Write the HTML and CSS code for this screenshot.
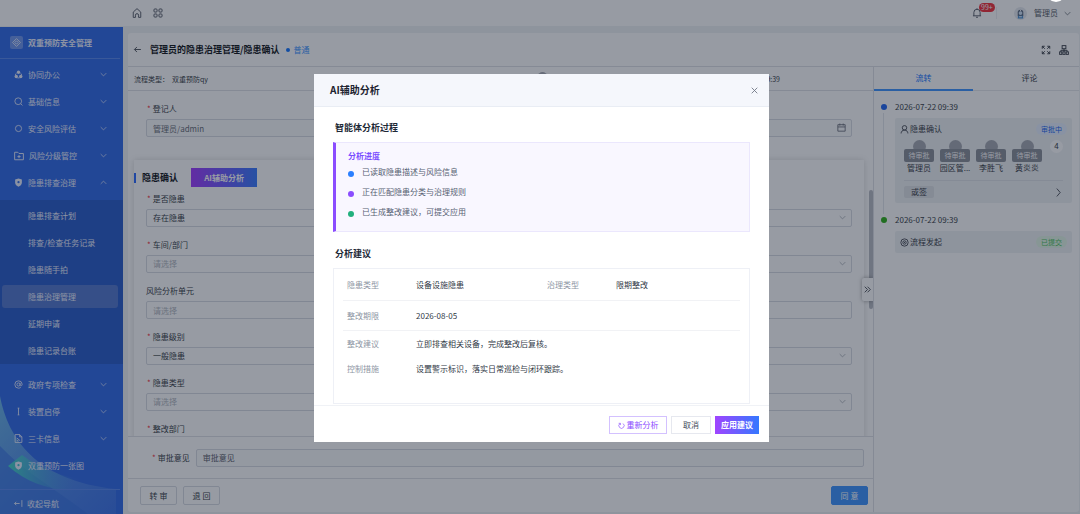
FILE: index.html
```html
<!DOCTYPE html>
<html lang="zh-CN">
<head>
  <meta charset="UTF-8" />
  <meta name="viewport" content="width=device-width, initial-scale=1.0"/>
  <title>双重预防安全管理</title>
  <link rel="stylesheet" href="styles.css">
</head>
<body>
  <!-- shared icons -->
  <svg class="sprite" aria-hidden="true">
    <symbol id="down" viewBox="0 0 10 10"><path d="M1 3l4 4 4-4"/></symbol>
    <symbol id="up" viewBox="0 0 10 10"><path d="M1 7l4-4 4 4"/></symbol>
    <symbol id="shield" viewBox="0 0 16 16"><path fill="currentColor" stroke="none" fill-rule="evenodd" d="M8 1l6 1.500v6C14 12 11 14 8 15.500 5 14 2 12 2 8.500v-6zM8 5.500a2 2 0 100 4 2 2 0 000-4z"/></symbol>
  </svg>

  <div class="app">
    <header class="topbar">
      <div class="topbar-left">
        <svg class="icon" viewBox="0 0 16 16"><path d="M2 15V6.500L8 1l6 5.500V15h-3.500v-3.500a2.500 2.500 0 00-5 0V15z"/></svg>
        <svg class="icon" viewBox="0 0 16 16"><rect x="1.500" y="1.500" width="5" height="5" rx="1.500"/><rect x="9.500" y="1.500" width="5" height="5" rx="1.500"/><rect x="1.500" y="9.500" width="5" height="5" rx="1.500"/><rect x="9.500" y="9.500" width="5" height="5" rx="1.500"/></svg>
      </div>
      <div class="topbar-right">
        <span class="bell">
          <svg class="icon" viewBox="0 0 16 16"><path d="M1.500 12.500h13M3 12.500V7a5 5 0 0110 0v5.500M8 2V.5M6.500 14.800h3"/></svg>
          <span class="count">99+</span>
        </span>
        <span class="avatar">
          <svg viewBox="0 0 14 14"><path fill="#5d6b80" d="M4 6a3 3 0 016 0v4H4z"/><circle cx="7" cy="6.500" r="2" fill="#cfe3f7"/><path fill="#4b8fd0" d="M4.500 9.500h5l.5 3H4z"/><path stroke="#fff" d="M5.500 10.500h3M7 3v1.500"/></svg>
        </span>
        <span class="user">管理员</span>
        <svg class="icon small" viewBox="0 0 10 10"><use href="#down"/></svg>
      </div>
    </header>

    <div class="layout">
      <nav class="sidebar">
        <svg class="swoosh" viewBox="0 0 123 128" preserveAspectRatio="none" aria-hidden="true">
          <defs>
            <linearGradient id="sw1" x1="0" y1="0" x2="1" y2="1"><stop offset="0" stop-color="#7fd0e8" stop-opacity=".75"/><stop offset="1" stop-color="#6f9df0" stop-opacity=".2"/></linearGradient>
            <linearGradient id="sw2" x1="0" y1="0" x2="1" y2="0"><stop offset="0" stop-color="#45d8c8"/><stop offset="1" stop-color="#4b86ea" stop-opacity="0"/></linearGradient>
          </defs>
          <path fill="url(#sw1)" d="M0 10C8 52 36 95 116 103v25H0z"/>
          <path fill="#3b74e4" opacity=".6" d="M0 60c24 26 54 42 88 68H0z"/>
          <path fill="url(#sw2)" d="M8 80L22 69c16 12 34 20 58 24l-12 12C46 102 26 96 8 80z"/>
        </svg>
        <div class="brand">
          <span class="brand-logo"><svg class="icon" viewBox="0 0 16 16"><path d="M8 1l7 7-7 7-7-7zM8 5l3 3-3 3-3-3z"/></svg></span>
          双重预防安全管理
        </div>
        <div class="menu">
          <a href="#"><svg class="icon" viewBox="0 0 16 16"><circle class="fill" cx="8" cy="4" r="3"/><circle class="fill" cx="4" cy="11.500" r="3"/><circle class="fill" cx="12" cy="11.500" r="3"/><path d="M4 6l-2 3M12 6l2 3M6 14h4"/></svg><span>协同办公</span><svg class="arrow"><use href="#down"/></svg></a>
          <a href="#"><svg class="icon" viewBox="0 0 16 16"><circle cx="7.500" cy="7.500" r="6"/><path d="M12 12l3 3"/></svg><span>基础信息</span><svg class="arrow"><use href="#down"/></svg></a>
          <a href="#"><svg class="icon" viewBox="0 0 16 16"><circle cx="8" cy="8" r="5.500"/></svg><span>安全风险评估</span><svg class="arrow"><use href="#down"/></svg></a>
          <a href="#"><svg class="icon big" viewBox="0 0 16 16"><path d="M1 2h5l2 2h7v10H1zM8 6.500v5M5.500 9h5"/></svg><span>风险分级管控</span><svg class="arrow"><use href="#down"/></svg></a>
          <a href="#"><svg class="icon"><use href="#shield"/></svg><span>隐患排查治理</span><svg class="arrow"><use href="#up"/></svg></a>
        </div>
        <div class="submenu">
          <a href="#">隐患排查计划</a>
          <a href="#">排查/检查任务记录</a>
          <a href="#">隐患随手拍</a>
          <a href="#" class="active">隐患治理管理</a>
          <a href="#">延期申请</a>
          <a href="#">隐患记录台账</a>
        </div>
        <div class="menu">
          <a href="#"><svg class="icon" viewBox="0 0 16 16"><circle cx="8" cy="8" r="2.800"/><path d="M10.800 5v4c0 2.500 3.700 2 3.700-1.500A6.500 6.500 0 108 14.500c1.500 0 3-.5 4-1.300"/></svg><span>政府专项检查</span><svg class="arrow"><use href="#down"/></svg></a>
          <a href="#"><svg class="icon" viewBox="0 0 16 16"><path d="M8 2v12M6.500 2h3M6.500 14h3"/></svg><span>装置启停</span><svg class="arrow"><use href="#down"/></svg></a>
          <a href="#"><svg class="icon" viewBox="0 0 16 16"><path d="M2 1h8l4 4v10H2zM10 1v4h4M5 7l6 5M5 12h3"/></svg><span>三卡信息</span><svg class="arrow"><use href="#down"/></svg></a>
          <a href="#"><svg class="icon"><use href="#shield"/></svg><span>双重预防一张图</span></a>
        </div>
        <button class="collapse"><svg class="icon" viewBox="0 0 16 16"><path d="M10 8H1M4 5L1 8l3 3M14 2v12"/></svg>收起导航</button>
      </nav>

      <main class="page">
        <div class="page-head">
          <svg class="icon" viewBox="0 0 16 16"><path d="M14 8H3M7 3.500L2.500 8 7 12.500"/></svg>
          <h1>管理员的隐患治理管理/隐患确认</h1>
          <span class="level">普通</span>
          <svg class="icon big push" viewBox="0 0 16 16"><path d="M2 6V2h4M2 2l4 4M14 6V2h-4M14 2l-4 4M2 10v4h4M2 14l4-4M14 10v4h-4M14 14l-4-4"/></svg>
          <svg class="icon big" viewBox="0 0 16 16"><rect x="5" y="1" width="6" height="5"/><path d="M8 6v3M3 11V8.500h10V11M8 8.500V11"/><rect x="1" y="11" width="3.500" height="4"/><rect x="6.200" y="11" width="3.500" height="4"/><rect x="11.500" y="11" width="3.500" height="4"/></svg>
        </div>

        <div class="page-body">
          <section class="work">
            <div class="meta">
              <span>流程类型：</span><span>双重预防qy</span>
              <span class="meta-time">发起时间：2026-07-22 09:39</span>
              <span class="pull"></span>
            </div>

            <div class="scroll">
              <div class="field first">
                <label class="req" for="reg">登记人</label>
                <div class="control">
                  <input id="reg" type="text" value="管理员/admin" readonly />
                  <svg class="icon" viewBox="0 0 16 16"><path d="M1.500 3h13v11.500h-13zM1.500 7h13M5 1v3.500M11 1v3.500"/></svg>
                </div>
              </div>

              <div class="panel">
                <div class="panel-head">
                  <h2>隐患确认</h2>
                  <button class="ai">AI辅助分析</button>
                </div>
                <div class="field">
                  <label class="req" for="f1">是否隐患</label>
                  <div class="control"><select id="f1"><option>存在隐患</option></select><svg class="arrow"><use href="#down"/></svg></div>
                </div>
                <div class="field">
                  <label class="req" for="f2">车间/部门</label>
                  <div class="control"><select id="f2" class="empty"><option>请选择</option></select><svg class="arrow"><use href="#down"/></svg></div>
                </div>
                <div class="field">
                  <label for="f3">风险分析单元</label>
                  <div class="control"><input id="f3" type="text" placeholder="请选择" /></div>
                </div>
                <div class="field">
                  <label class="req" for="f4">隐患级别</label>
                  <div class="control"><select id="f4"><option>一般隐患</option></select><svg class="arrow"><use href="#down"/></svg></div>
                </div>
                <div class="field">
                  <label class="req" for="f5">隐患类型</label>
                  <div class="control"><select id="f5" class="empty"><option>请选择</option></select><svg class="arrow"><use href="#down"/></svg></div>
                </div>
                <div class="field">
                  <label class="req" for="f6">整改部门</label>
                  <div class="control"><select id="f6" class="empty"><option>请选择</option></select></div>
                </div>
              </div>
              <span class="thumb"></span>
              <button class="fold" aria-label="收起"><svg class="icon" viewBox="0 0 16 16"><path d="M3 3l5 5-5 5M8 3l5 5-5 5"/></svg></button>
            </div>

            <div class="opinion">
              <label class="req" for="opinion">审批意见</label>
              <input id="opinion" type="text" placeholder="审批意见" />
            </div>
            <div class="actions">
              <button>转 审</button>
              <button>退 回</button>
              <button class="primary">同 意</button>
            </div>
          </section>

          <aside class="flow">
            <div class="tabs">
              <button class="on">流转</button>
              <button>评论</button>
            </div>
            <ol class="timeline">
              <li>
                <time>2026-07-22 09:39</time>
                <div class="step">
                  <div class="step-head">
                    <svg class="icon" viewBox="0 0 16 16"><circle cx="8" cy="5" r="4"/><path d="M2 15c0-3 2-6 6-6s6 3 6 6"/></svg>
                    隐患确认
                    <span class="tag blue">审批中</span>
                  </div>
                  <div class="people">
                    <div class="person"><i></i><b>待审批</b><span>管理员</span></div>
                    <div class="person"><i></i><b>待审批</b><span>园区管...</span></div>
                    <div class="person"><i></i><b>待审批</b><span>李胜飞</span></div>
                    <div class="person"><i></i><b>待审批</b><span>黄炎炎</span></div>
                    <span class="num">4</span>
                  </div>
                  <div class="step-foot">
                    <span>或签</span>
                    <svg class="icon" viewBox="0 0 16 16"><path d="M5 1l6 7-6 7"/></svg>
                  </div>
                </div>
              </li>
              <li class="done">
                <time>2026-07-22 09:39</time>
                <div class="step">
                  <div class="step-head">
                    <svg class="icon" viewBox="0 0 16 16"><circle cx="8" cy="8" r="6.500"/><circle cx="8" cy="8" r="3"/><circle class="fill" cx="8" cy="8" r="1"/></svg>
                    流程发起
                    <span class="tag green">已提交</span>
                  </div>
                </div>
              </li>
            </ol>
          </aside>
        </div>
      </main>
    </div>
  </div>

  <div class="mask">
    <span class="knob"></span>
    <div class="modal" role="dialog" aria-labelledby="modalTitle">
      <div class="modal-head">
        <h2 id="modalTitle">AI辅助分析</h2>
        <button class="close" aria-label="关闭"><svg class="icon" viewBox="0 0 16 16"><path d="M3 3l10 10M13 3L3 13"/></svg></button>
      </div>
      <div class="modal-body">
        <h3>智能体分析过程</h3>
        <div class="progress">
          <h4>分析进度</h4>
          <ul>
            <li class="c-blue">已读取隐患描述与风险信息</li>
            <li class="c-purple">正在匹配隐患分类与治理规则</li>
            <li class="c-green">已生成整改建议，可提交应用</li>
          </ul>
        </div>
        <h3>分析建议</h3>
        <dl class="advice">
          <div class="row line"><dt>隐患类型</dt><dd>设备设施隐患</dd><dt>治理类型</dt><dd>限期整改</dd></div>
          <div class="row line"><dt>整改期限</dt><dd>2026-08-05</dd></div>
          <div class="row"><dt>整改建议</dt><dd class="wide">立即排查相关设备，完成整改后复核。</dd></div>
          <div class="row"><dt>控制措施</dt><dd class="wide">设置警示标识，落实日常巡检与闭环跟踪。</dd></div>
        </dl>
      </div>
      <div class="modal-foot">
        <button class="again"><svg class="icon" viewBox="0 0 16 16"><path d="M4.500 3.500a6 6 0 107 0M1.500 3h4v4"/></svg>重新分析</button>
        <button class="cancel">取消</button>
        <button class="apply">应用建议</button>
      </div>
    </div>
  </div>
</body>
</html>
```

FILE: styles.css
```css
* {
  box-sizing: border-box;
}

body {
  margin: 0;
  font-family: "Noto Sans CJK SC", sans-serif;
  font-size: 8px;
  line-height: 12px;
  color: #3a3f48;
  background: #f0f2f5;
}

h1, h2, h3, h4, ul, ol, dl, dd {
  margin: 0;
  padding: 0;
  list-style: none;
}

a {
  color: inherit;
  text-decoration: none;
}

button, input, select {
  font: inherit;
  color: inherit;
  margin: 0;
  padding: 0;
  border: 0;
  background: none;
}

button {
  cursor: pointer;
}

.sprite {
  position: absolute;
  width: 0;
  height: 0;
}

.icon, .arrow {
  flex: none;
  width: 9px;
  height: 9px;
  fill: none;
  stroke: currentColor;
  stroke-width: 1.5;
}

.icon .fill {
  fill: currentColor;
  stroke: none;
}

.icon.big {
  width: 10px;
  height: 10px;
}

.icon.small, .arrow {
  width: 7px;
  height: 7px;
  stroke-width: 1;
}

.app {
  display: flex;
  flex-direction: column;
  height: 100vh;
}

/* top bar */
.topbar {
  flex: none;
  display: flex;
  justify-content: space-between;
  height: 27px;
  padding: 0 9px 0 132px;
  background: #fff;
  border-bottom: 1px solid #f0f2f5;
  color: #555b66;
}

.topbar-left, .topbar-right {
  display: flex;
  align-items: center;
}

.topbar-left {
  gap: 11px;
}

.topbar-left .icon, .bell .icon {
  width: 10px;
  height: 10px;
}

.bell {
  position: relative;
  display: flex;
  align-items: center;
  width: 25px;
  height: 12px;
  margin-right: 17px;
  border-right: 1px solid #eceef2;
}

.count {
  position: absolute;
  left: 7px;
  top: -4px;
  height: 9px;
  padding: 0 2px;
  border-radius: 5px;
  background: #f5323c;
  color: #fff;
  font-size: 7px;
  line-height: 9px;
}

.avatar {
  width: 13px;
  height: 13px;
  border-radius: 50%;
  background: #e6eaf0;
}

.avatar svg {
  display: block;
  fill: none;
}

.user {
  margin: 0 6px 0 7px;
}

.layout {
  flex: 1;
  display: flex;
  min-height: 0;
}

/* sidebar */
.sidebar {
  position: relative;
  flex: none;
  display: flex;
  flex-direction: column;
  width: 123px;
  background: #326be8;
  color: #eaf0ff;
}

.swoosh {
  position: absolute;
  left: 0;
  bottom: 0;
  width: 100%;
  height: 128px;
}

.brand {
  display: flex;
  align-items: center;
  gap: 5px;
  height: 32px;
  margin: 0 3px 2px 0;
  padding-left: 10px;
  border-bottom: 1px solid #5b8af0;
  font-weight: bold;
}

.brand-logo {
  display: flex;
  align-items: center;
  justify-content: center;
  width: 13px;
  height: 13px;
  border-radius: 2px;
  background: #6f97f0;
}

.menu {
  position: relative;
}

.menu a {
  display: flex;
  align-items: center;
  height: 27px;
  padding: 0 16px 0 14px;
}

.menu span {
  flex: 1;
  margin-left: 5px;
}

.submenu {
  margin: 4px 0 3px;
  padding: 2px 5px 2px 2px;
  background: #2b5dca;
}

.submenu a {
  display: block;
  height: 23px;
  margin: 2px 0 4px;
  padding-left: 26px;
  border-radius: 3px;
  line-height: 23px;
}

.submenu a:last-child {
  margin-bottom: 0;
}

.submenu .active {
  background: #5579cf;
}

.submenu + .menu {
  padding-top: 4px;
}

.collapse {
  position: relative;
  display: flex;
  align-items: center;
  gap: 4px;
  height: 25px;
  margin: auto 3px 0 0;
  padding: 3px 0 0 14px;
  border-top: 1px solid #5b8af0;
}

/* page */
.page {
  flex: 1;
  display: flex;
  flex-direction: column;
  min-width: 0;
  margin: 6px 1px 2px 5px;
  background: #fff;
  border-radius: 3px;
}

.page-head {
  flex: none;
  display: flex;
  align-items: center;
  height: 34px;
  padding: 0 10px 0 5px;
  border-bottom: 1px solid #dfe2e7;
}

.page-head h1 {
  margin-left: 8px;
  font-size: 9px;
  color: #14171c;
}

.level {
  display: flex;
  align-items: center;
  gap: 3px;
  margin-left: 7px;
  color: #4096ff;
}

.level::before {
  content: "";
  width: 4px;
  height: 4px;
  border-radius: 50%;
  background: #1677ff;
}

.push {
  margin: 0 8px 0 auto;
}

.page-body {
  flex: 1;
  display: flex;
  min-height: 0;
}

.work {
  flex: 1;
  display: flex;
  flex-direction: column;
  min-width: 0;
  border-right: 1px solid #dfe2e7;
}

.meta {
  position: relative;
  flex: none;
  display: flex;
  align-items: center;
  gap: 3px;
  height: 24px;
  padding: 0 93px 0 6px;
  border-bottom: 1px solid #dfe2e7;
  font-size: 7px;
}

.meta-time {
  margin-left: auto;
}

.pull {
  position: absolute;
  left: 55%;
  top: 5px;
  width: 9px;
  height: 9px;
  border-radius: 50%;
  background: #a9adb5;
}

.scroll {
  position: relative;
  flex: 1;
  min-height: 0;
  overflow: hidden;
  padding: 12px 9px 0 6px;
}

.field {
  height: 46px;
  padding: 0 12px;
}

.field label {
  display: block;
  margin-bottom: 4px;
}

.req::before {
  content: "*";
  margin: 0 2px 0 1px;
  color: #f5323c;
}

.control {
  position: relative;
}

.control input, .control select, .opinion input {
  display: block;
  width: 100%;
  height: 18px;
  padding: 0 6px;
  border: 1px solid #d9dce3;
  border-radius: 2px;
  appearance: none;
}

.first input {
  background: #fafbfc;
  color: #6b7079;
}

.control .empty, .control input::placeholder {
  color: #b4b8c0;
}

.control .icon, .control .arrow {
  position: absolute;
  right: 6px;
  top: 5px;
  color: #9a9fa9;
}

.control .icon {
  top: 4px;
  color: #666b75;
}

.panel {
  margin-top: 11px;
  padding-top: 8px;
  box-shadow: 0 0 6px rgba(0, 0, 0, 0.15);
}

.panel-head {
  display: flex;
  align-items: center;
  height: 19px;
  margin-bottom: 6px;
}

.panel-head h2 {
  padding-left: 6px;
  border-left: 2px solid #2f6bff;
  font-size: 9px;
  line-height: 10px;
  color: #14171c;
}

.ai {
  width: 66px;
  height: 19px;
  margin-left: 13px;
  background: linear-gradient(90deg, #a33dff, #3a7dff);
  color: #fff;
  font-weight: bold;
}

.thumb {
  position: absolute;
  right: 0;
  top: 99px;
  width: 4px;
  height: 119px;
  border-radius: 2px;
  background: #b9bcc3;
}

.fold {
  position: absolute;
  right: 0;
  top: 187px;
  display: flex;
  align-items: center;
  justify-content: center;
  width: 11px;
  height: 23px;
  border-radius: 2px 0 0 2px;
  background: #fff;
  box-shadow: 0 0 4px rgba(0, 0, 0, 0.35);
}

.opinion {
  flex: none;
  display: flex;
  align-items: center;
  gap: 6px;
  height: 42px;
  padding: 0 9px 0 23px;
  border-top: 1px solid #dfe2e7;
}

.opinion label {
  flex: none;
}

.opinion input {
  flex: 1;
  background: #fafbfc;
}

.opinion input::placeholder {
  color: #5c616b;
}

.actions {
  flex: none;
  display: flex;
  align-items: center;
  gap: 6px;
  height: 34px;
  padding: 0 5px 0 12px;
  border-top: 1px solid #dfe2e7;
}

.actions button {
  width: 37px;
  height: 19px;
  border: 1px solid #d9dce3;
  border-radius: 2px;
}

.actions .primary {
  margin-left: auto;
  border-color: #4096ff;
  background: #4096ff;
  color: #fff;
}

/* approval flow */
.flow {
  flex: none;
  width: 205px;
}

.tabs {
  display: flex;
  gap: 7px;
  height: 24px;
  border-bottom: 1px solid #e6e8ec;
}

.tabs button {
  flex: 1;
  height: 24px;
  border-bottom: 2px solid transparent;
}

.tabs .on {
  border-color: #4096ff;
  color: #1677ff;
}

.timeline {
  padding: 10px 7px 0 21px;
}

.timeline li {
  position: relative;
  padding-bottom: 11px;
}

.timeline li::before {
  content: "";
  position: absolute;
  left: -14px;
  top: 3px;
  width: 6px;
  height: 6px;
  border-radius: 50%;
  background: #2468f2;
}

.timeline li:first-child::after {
  content: "";
  position: absolute;
  left: -12px;
  top: 12px;
  bottom: 0;
  border-left: 1px solid #e3e6eb;
}

.timeline .done::before {
  background: #30b11c;
}

.timeline time {
  display: block;
  margin-bottom: 5px;
}

.step {
  padding: 0 5px;
  border-radius: 2px;
  background: #f0f2f5;
}

.step-head {
  display: flex;
  align-items: center;
  gap: 1px;
  height: 22px;
}

.tag {
  margin-left: auto;
  padding: 0 5px;
  border-radius: 6px;
  font-size: 7px;
}

.blue {
  background: #e6f0ff;
  color: #2468f2;
}

.green {
  background: #e3f7e6;
  color: #4fc35e;
}

.people {
  display: flex;
  gap: 6px;
  height: 41px;
  margin: 0 4px;
  border-bottom: 1px solid #e0e3e8;
}

.person {
  display: flex;
  flex-direction: column;
  align-items: center;
  width: 30px;
  white-space: nowrap;
}

.person i {
  width: 13px;
  height: 13px;
  margin-bottom: -4px;
  border-radius: 50%;
  background: #a6aab2;
}

.person b {
  position: relative;
  width: 30px;
  height: 13px;
  border-radius: 2px;
  background: #8b9099;
  color: #fff;
  font-size: 7px;
  font-weight: normal;
  text-align: center;
}

.num {
  width: 13px;
  height: 13px;
  margin-left: auto;
  border-radius: 50%;
  background: #fff;
  text-align: center;
}

.step-foot {
  display: flex;
  align-items: center;
  justify-content: space-between;
  height: 22px;
  padding: 0 4px;
}

.step-foot span {
  width: 30px;
  border-radius: 2px;
  background: #e0e3e7;
  text-align: center;
}

/* modal */
.mask {
  position: fixed;
  inset: 0;
  display: flex;
  align-items: center;
  justify-content: center;
  background: rgba(15, 23, 42, 0.43);
}

.knob {
  position: absolute;
  right: 14px;
  top: -18px;
  width: 20px;
  height: 20px;
  border-radius: 50%;
  background: #fff;
}

.modal {
  width: 455px;
  max-width: 100%;
  margin: 2px 0 0 3px;
  background: #fff;
}

.modal-head {
  display: flex;
  align-items: center;
  justify-content: space-between;
  height: 33px;
  padding: 0 10px 0 16px;
  background: #f5f7fc;
  border-bottom: 1px solid #e9edf4;
}

.modal-head h2 {
  font-size: 10px;
  color: #1d2430;
}

.close {
  display: flex;
  color: #6b7280;
}

.modal-body {
  padding: 15px 19px 1px;
}

.modal-body h3 {
  padding-left: 2px;
  font-size: 9px;
  color: #1d2836;
}

.progress {
  height: 90px;
  margin: 8px 0 16px;
  padding: 7px 12px;
  border: 1px solid #ebe7fd;
  border-left: 3px solid #8b4dff;
  background: #f9f7ff;
}

.progress h4 {
  font-size: 8px;
  color: #7a4dff;
}

.progress li {
  display: flex;
  align-items: center;
  gap: 8px;
  height: 20px;
  color: #566072;
}

.progress li::before {
  content: "";
  width: 6px;
  height: 6px;
  margin-top: 4px;
  border-radius: 50%;
  background: #2b7fff;
}

.progress .c-purple::before {
  background: #8b4dff;
}

.progress .c-green::before {
  background: #22b07d;
}

.advice {
  height: 136px;
  margin-top: 8px;
  padding: 0 9px;
  border: 1px solid #eef0f6;
}

.row {
  display: grid;
  grid-template-columns: 69px 131px 69px 1fr;
  align-items: center;
  height: 25px;
  padding: 0 4px;
}

.row.line {
  height: 30px;
  border-bottom: 1px solid #f1f2f5;
}

.row.line:first-child {
  height: 32px;
}

.row dt {
  color: #8d95a3;
}

.row dd {
  color: #303846;
}

.row .wide {
  grid-column: 2 / -1;
}

.modal-foot {
  display: flex;
  justify-content: flex-end;
  gap: 4px;
  padding: 10px 10px 8px 0;
  border-top: 1px solid #f0f2f6;
}

.modal-foot button {
  display: flex;
  align-items: center;
  justify-content: center;
  gap: 2px;
  height: 18px;
  border: 1px solid #e6e8ef;
}

.modal-foot .icon {
  width: 7px;
  height: 7px;
}

.modal-foot .again {
  width: 58px;
  border-color: #d3c1ff;
  color: #8b4dff;
}

.modal-foot .cancel {
  width: 40px;
  color: #444c5a;
}

.modal-foot .apply {
  width: 44px;
  border: 0;
  background: linear-gradient(90deg, #a044ff, #3478ff);
  color: #fff;
  font-weight: bold;
}
```
